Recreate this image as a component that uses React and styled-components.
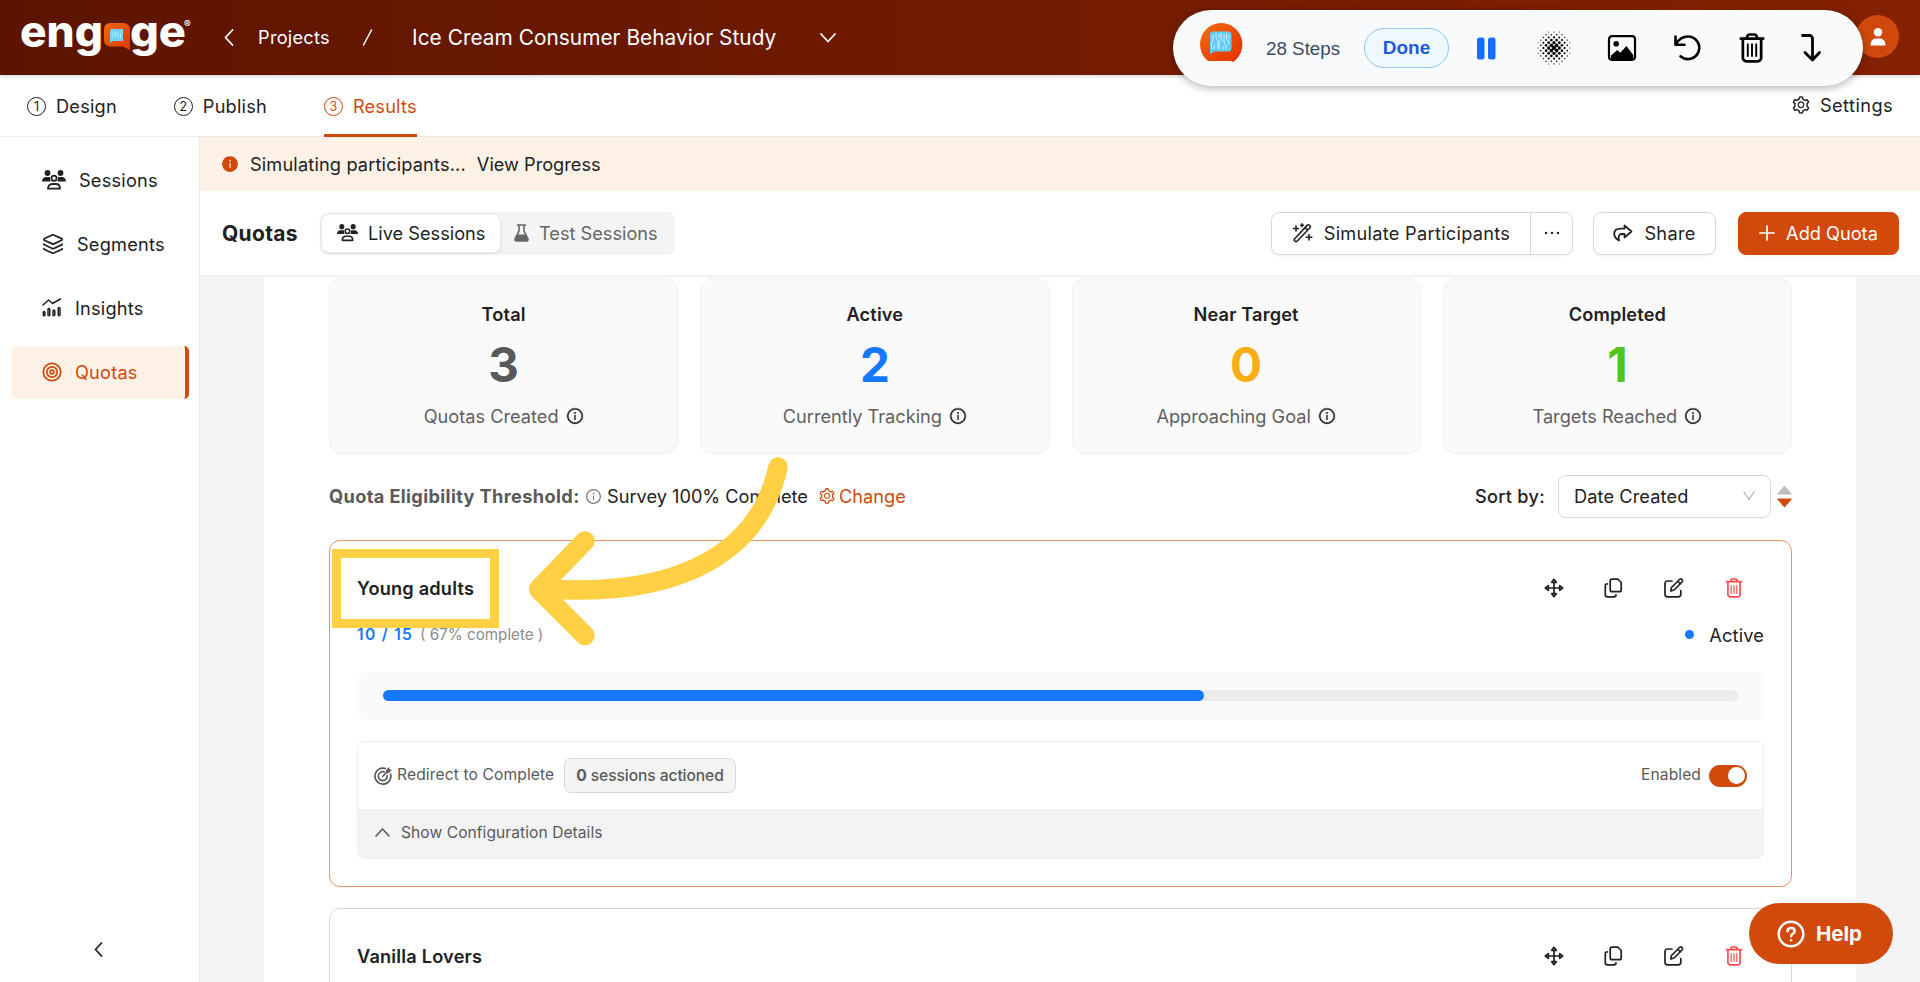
import React from "react";
import styled, { createGlobalStyle, css } from "styled-components";
import {
  AiOutlineSetting,
  AiOutlineInfoCircle,
  AiFillInfoCircle,
} from "react-icons/ai";
import { Layers } from "lucide-react";

const GlobalStyle = createGlobalStyle`
  * {
    box-sizing: border-box;
  }

  body {
    margin: 0;
    overflow: hidden;
    background: #fff;
    color: #212121;
    font-family: "Inter", "Open Sans", sans-serif;
    font-size: 18.2px;
    line-height: 28px;
  }

  svg {
    display: block;
    flex: none;
    overflow: visible;
  }
`;

/* ---------- layout ---------- */

const Page = styled.div`
  width: 1920px;
  height: 982px;
  display: flex;
  flex-direction: column;
  overflow: hidden;
  position: relative;
`;

const Header = styled.header`
  height: 75px;
  flex: none;
  display: flex;
  align-items: center;
  padding: 0 21px;
  color: #fff;
  background: linear-gradient(90deg, #5c1400 0%, #731b00 55%, #852100 100%);
  box-shadow: 0 1px 4px rgba(0, 0, 0, 0.2);
  position: relative;
`;

const BackButton = styled.div`
  width: 34px;
  margin-left: 27px;
`;

const Crumb = styled.span`
  width: 104px;
  padding-bottom: 1px;
  letter-spacing: 0.26px;
`;

const Slash = styled.span`
  width: 50px;
  display: flex;
`;

const ProjectName = styled.span`
  width: 408px;
  font-size: 20.8px;
  letter-spacing: 0.05px;
  white-space: nowrap;
`;

const Tabs = styled.nav`
  height: 62px;
  flex: none;
  display: flex;
  justify-content: space-between;
  padding: 0 27px;
  border-bottom: 1px solid #ececec;
`;

const TabGroup = styled.div`
  display: flex;
  gap: 57px;
`;

const Tab = styled.div`
  height: 62px;
  display: flex;
  align-items: center;
  gap: 10px;
  padding-top: 3px;
  letter-spacing: 0.2px;
  color: ${(p) => (p.$active ? "#d1490b" : "inherit")};
  border-bottom: 3px solid ${(p) => (p.$active ? "#d1490b" : "transparent")};
`;

const StepNumber = styled.span`
  width: 19px;
  height: 19px;
  border: 1.3px solid currentColor;
  border-radius: 50%;
  font-size: 12.5px;
  line-height: 17px;
  letter-spacing: 0;
  text-align: center;
`;

const SettingsLink = styled.div`
  display: flex;
  align-items: center;
  gap: 9px;
  padding-bottom: 2px;
  letter-spacing: 0.42px;
`;

const Body = styled.div`
  flex: 1;
  min-height: 0;
  display: flex;
`;

const Sidebar = styled.aside`
  width: 200px;
  flex: none;
  border-right: 1px solid #ebebeb;
  padding: 17px 10px 20px 11px;
  display: flex;
  flex-direction: column;
  gap: 11px;
`;

const SideItem = styled.div`
  height: 53px;
  display: flex;
  align-items: center;
  gap: 13px;
  padding: 0 0 2px 31px;
  border-radius: 5px;
  letter-spacing: 0.2px;
  border-right: 4px solid transparent;

  ${(p) =>
    p.$active &&
    css`
      color: #d1490b;
      background: #fef2e6;
      border-right-color: #d1490b;
    `}
`;

const Collapse = styled.div`
  margin-top: auto;
  display: flex;
  justify-content: center;
  padding: 0 2px 5px 0;
`;

const Main = styled.main`
  flex: 1;
  min-width: 0;
  display: flex;
  flex-direction: column;
`;

const Banner = styled.div`
  height: 54px;
  flex: none;
  display: flex;
  align-items: center;
  padding-left: 21px;
  background: #fef2e6;
  letter-spacing: 0.15px;

  svg {
    margin-right: 11px;
  }

  span + span {
    margin-left: 11px;
    letter-spacing: 0;
  }
`;

const Toolbar = styled.div`
  height: 86px;
  flex: none;
  display: flex;
  align-items: center;
  padding: 0 21px 0 22px;
  border-bottom: 2px solid #f1f1f1;
`;

const PageTitle = styled.h1`
  margin: 2px 0 0;
  width: 98px;
  font-size: 21px;
  font-weight: 700;
  letter-spacing: 0.3px;
`;

const Segmented = styled.div`
  width: 355px;
  height: 43px;
  display: flex;
  padding: 3px 2px;
  border-radius: 8px;
  background: #f4f4f4;
`;

const Segment = styled.div`
  flex: none;
  display: flex;
  align-items: center;
  border-radius: 7px;
  padding-left: 14px;
  gap: 10px;
  width: 178px;
  color: #666;

  ${(p) =>
    p.$active &&
    css`
      padding-left: 15px;
      color: #222;
      background: #fff;
      box-shadow: 0 1px 4px rgba(0, 0, 0, 0.12);
    `}
`;

const Actions = styled.div`
  margin-left: auto;
  display: flex;
`;

const Button = styled.button`
  height: 43px;
  width: ${(p) => p.$width}px;
  padding: 0;
  display: flex;
  align-items: center;
  justify-content: center;
  gap: 11px;
  font: inherit;
  letter-spacing: 0.28px;
  white-space: nowrap;
  color: #222;
  background: #fff;
  border: 1.3px solid #d9d9d9;
  border-radius: 8px;
  box-shadow: 0 2px 1px rgba(0, 0, 0, 0.03);

  ${(p) =>
    p.$primary &&
    css`
      color: #fff;
      letter-spacing: 0;
      border-color: #d1490b;
      background: #d1490b;
    `}
`;

const ShareButton = styled(Button)`
  margin: 0 22px 0 20px;
`;

const ButtonGroup = styled.div`
  display: flex;

  ${Button}:first-child {
    border-radius: 8px 0 0 8px;
  }

  ${Button}:last-child {
    margin-left: -1px;
    border-radius: 0 8px 8px 0;
  }
`;

const Scroll = styled.div`
  flex: 1;
  min-height: 0;
  overflow: hidden;
  padding: 0 64px;
  background: #f4f4f4;
`;

const Content = styled.div`
  height: 800px;
  padding: 1px 64px 0 65px;
  background: #fff;
`;

/* ---------- stat cards ---------- */

const StatGrid = styled.div`
  display: grid;
  grid-template-columns: repeat(4, 1fr);
  gap: 22px;
`;

const StatCard = styled.div`
  height: 176px;
  display: flex;
  flex-direction: column;
  align-items: center;
  padding-top: 21px;
  background: #fafafa;
  border: 1.3px solid #f0f0f0;
  border-radius: 13px;
`;

const StatTitle = styled.div`
  font-weight: 600;
  letter-spacing: 0.15px;
`;

const StatValue = styled.div`
  height: 50px;
  margin: 11px 0 13px;
  font-size: 47.5px;
  line-height: 52px;
  font-weight: 700;
  color: ${(p) => p.$color};
`;

const StatLabel = styled.div`
  display: flex;
  align-items: center;
  gap: 7px;
  color: #5f5f5f;

  svg {
    color: #212121;
    stroke: currentColor;
    stroke-width: 18;
  }
`;

/* ---------- threshold row ---------- */

const FilterRow = styled.div`
  height: 42px;
  margin: 21px 0 23px;
  display: flex;
  align-items: center;
`;

const ThresholdLabel = styled.span`
  width: 256px;
  font-weight: 700;
  color: #5a5a5a;
  letter-spacing: 0.36px;
  white-space: nowrap;
`;

const ThresholdValue = styled.span`
  width: 211px;
  margin-left: 5px;
  white-space: nowrap;
`;

const ChangeLink = styled.span`
  display: flex;
  align-items: center;
  gap: 3px;
  color: #d1490b;
`;

const SortLabel = styled.span`
  margin-left: auto;
  margin-right: 13px;
  font-weight: 500;
  letter-spacing: 0.25px;
`;

const Select = styled.div`
  width: 213px;
  height: 43px;
  display: flex;
  align-items: center;
  justify-content: space-between;
  padding: 0 15px;
  border: 1.3px solid #d9d9d9;
  border-radius: 8px;
  letter-spacing: 0.1px;
`;

const SortArrows = styled.div`
  margin-left: 6px;
`;

/* ---------- quota cards ---------- */

const QuotaCard = styled.section`
  height: 347px;
  padding: 0 27px;
  margin-bottom: 21px;
  border: 1.4px solid ${(p) => (p.$selected ? "#ef925c" : "#d9d9d9")};
  border-radius: 11px;
`;

const QuotaHead = styled.div`
  display: flex;
  align-items: center;
  justify-content: space-between;
  height: 94px;
`;

const QuotaName = styled.h3`
  margin: 0;
  font-size: 18.2px;
  font-weight: 600;
  letter-spacing: 0.2px;
`;

const IconRow = styled.div`
  display: flex;
  gap: 40px;
  padding-right: 20px;
`;

const QuotaMeta = styled.div`
  display: flex;
  align-items: center;
  height: 28px;
  margin: -15px 0 24px;
  padding-top: 1px;
`;

const Count = styled.span`
  width: 63px;
  font-size: 15.6px;
  font-weight: 600;
  letter-spacing: 1.3px;
  color: #1677ff;
  white-space: pre;
`;

const Percent = styled.span`
  font-size: 15.2px;
  color: #8c8c8c;
`;

const Status = styled.span`
  margin-left: auto;
  display: flex;
  align-items: center;
  gap: 15px;
  letter-spacing: 0.15px;

  &:before {
    content: "";
    width: 9px;
    height: 9px;
    border-radius: 50%;
    background: #1677ff;
  }
`;

const ProgressPanel = styled.div`
  height: 48px;
  display: flex;
  align-items: center;
  padding: 0 26px 1px;
  background: #fafafa;
  border-radius: 10px;
`;

const Track = styled.div`
  flex: 1;
  height: 11px;
  border-radius: 6px;
  background: #ebebeb;
`;

const Fill = styled.div`
  height: 100%;
  border-radius: 6px;
  background: #1677ff;
`;

const ActionBox = styled.div`
  margin-top: 21px;
  border: 1.3px solid #efefef;
  border-radius: 7px;
  overflow: hidden;
  font-size: 15.6px;
  color: #5a5a5a;
`;

const ActionRow = styled.div`
  height: 67px;
  display: flex;
  align-items: center;
  padding: 0 16px;
`;

const ActionName = styled.span`
  width: 167px;
  margin-left: 5px;
  letter-spacing: 0.12px;
  padding-bottom: 1px;
`;

const SessionsBadge = styled.span`
  width: 172px;
  height: 35px;
  line-height: 34px;
  text-align: center;
  font-size: 15.6px;
  font-weight: 500;
  letter-spacing: -0.08px;
  border: 1.3px solid #d9d9d9;
  border-radius: 7px;
  background: #f4f4f4;

  b {
    font-weight: 700;
  }
`;

const SwitchLabel = styled.span`
  margin-left: auto;
  margin-right: 8px;
  padding-bottom: 1px;
  letter-spacing: 0.1px;
`;

const Switch = styled.span`
  width: 38px;
  height: 22px;
  padding: 2.5px;
  display: flex;
  justify-content: flex-end;
  border-radius: 11px;
  background: #d1490b;

  &:before {
    content: "";
    width: 17px;
    height: 17px;
    border-radius: 50%;
    background: #fff;
  }
`;

const DetailsToggle = styled.div`
  height: 49px;
  display: flex;
  align-items: center;
  gap: 11px;
  padding: 0 17px 2px;
  letter-spacing: 0.05px;
  background: #f3f3f3;
  border-top: 1px solid #efefef;
`;

/* ---------- overlays ---------- */

const Avatar = styled.div`
  position: absolute;
  right: 21px;
  top: 15px;
  width: 43px;
  height: 43px;
  display: flex;
  align-items: center;
  justify-content: center;
  border-radius: 50%;
  background: #cf490c;
`;

const Recorder = styled.div`
  position: absolute;
  left: 1173px;
  top: 10px;
  width: 690px;
  height: 76px;
  display: flex;
  align-items: center;
  padding-left: 26px;
  border-radius: 38px;
  background: #f8fafc;
  box-shadow: 0 2px 8px rgba(0, 0, 0, 0.3);
  font-family: "Liberation Sans", Arial, sans-serif;
`;

const RecorderMark = styled.div`
  height: 50px;
`;

const StepCount = styled.span`
  width: 74px;
  margin: 1px 24px 0;
  font-size: 18.8px;
  color: #3b4a63;
  white-space: nowrap;
`;

const DonePill = styled.span`
  width: 85px;
  height: 40px;
  line-height: 38px;
  margin-right: 28px;
  text-align: center;
  font-size: 19px;
  font-weight: 700;
  color: #1d5bd8;
  background: #eff7ff;
  border: 1.4px solid #8cc8fb;
  border-radius: 20px;
`;

const RecorderIcons = styled.div`
  display: grid;
  grid-template-columns: 60px 71px 66px 63px 64px 20px;
  align-items: center;
`;

const Highlight = styled.div`
  position: absolute;
  left: 332px;
  top: 549px;
  width: 167px;
  height: 79px;
  border: 9.7px solid #ffd043;
`;

const PointerArrow = styled.svg`
  position: absolute;
  left: 520px;
  top: 450px;
`;

const HelpButton = styled.button`
  position: absolute;
  left: 1749px;
  top: 903px;
  width: 144px;
  height: 61px;
  display: flex;
  align-items: center;
  gap: 11px;
  padding: 0 0 0 28px;
  border: 0;
  border-radius: 31px;
  color: #fff;
  background: #d1490b;
  font: 700 20.5px "Inter", sans-serif;
`;

/* ---------- icons ---------- */

const Line = ({ w, h, stroke = 1.7, children, ...rest }) => (
  <svg
    width={w}
    height={h}
    viewBox={`0 0 ${w} ${h}`}
    fill="none"
    stroke="currentColor"
    strokeWidth={stroke}
    strokeLinecap="round"
    strokeLinejoin="round"
    {...rest}
  >
    {children}
  </svg>
);

const LogoMark = () => (
  <svg width="176" height="44" viewBox="0 0 176 44" fill="#fff">
    <defs>
      <linearGradient id="bubble" x1="0" y1="0" x2="1" y2="1">
        <stop offset="0" stopColor="#f0690f" />
        <stop offset="1" stopColor="#e23400" />
      </linearGradient>
    </defs>
    <g fontFamily="Inter, sans-serif" fontWeight="800" fontSize="43">
      <text x="-1" y="31" textLength="83" lengthAdjust="spacingAndGlyphs">
        eng
      </text>
      <text x="109" y="31" textLength="56" lengthAdjust="spacingAndGlyphs">
        ge
      </text>
    </g>
    <path
      d="M89 7h14a6 6 0 0 1 6 6v21l-7-3.500H89a6 6 0 0 1-6-6V13a6 6 0 0 1 6-6z"
      fill="url(#bubble)"
    />
    <path d="M91 13h11v12H92l-3 2V15a2 2 0 0 1 2-2z" fill="#6fd0fa" />
    <path
      d="M92 15v7M94.500 16v4M97 15v8M99.500 17v5M101 14v3"
      stroke="#c9efff"
      strokeWidth="0.8"
    />
    <text
      x="163"
      y="12"
      fontFamily="Inter, sans-serif"
      fontWeight="700"
      fontSize="10"
    >
      ®
    </text>
  </svg>
);

const RecorderLogo = () => (
  <svg width="43" height="40" viewBox="0 0 43 40">
    <defs>
      <linearGradient id="recorder" x1="0" y1="0" x2="1" y2="1">
        <stop offset="0" stopColor="#f36c0f" />
        <stop offset="1" stopColor="#e23000" />
      </linearGradient>
    </defs>
    <path
      d="M21.500 0a21.400 21.400 0 0 1 14 38l-1 1-3-1H9A21.400 21.400 0 0 1 21.500 0z"
      fill="url(#recorder)"
    />
    <path
      d="M14 8.500h15a3.500 3.500 0 0 1 3.500 3.500v13a3.500 3.500 0 0 1-3.500 3.500H15l-4 3V11.500a3 3 0 0 1 3-3z"
      fill="#5ecbf8"
    />
    <path
      d="M14 12v6l-1.500 2v6M17 10v5l2 2v9M20 11v4M22 9.500v8l-2 2v7M25 11v9l2 2v4M27.500 10v6l2 2v3M30 12v4M24 24v3M15 22v4"
      fill="none"
      stroke="#d3f3ff"
      strokeWidth="1"
    />
  </svg>
);

const ChevronIcon = ({ dir = "down", length = 16, stroke = 1.8 }) => {
  const half = length / 2;
  const vertical = dir === "left";
  const w = vertical ? half + 3 : length + 2;
  const h = vertical ? length + 2 : half + 3;
  const points = {
    down: `1,1 ${half + 1},${half + 1.5} ${length + 1},1`,
    up: `1,${half + 1.5} ${half + 1},1 ${length + 1},${half + 1.5}`,
    left: `${half + 1},1 1.5,${half + 1} ${half + 1},${length + 1}`,
  };
  return (
    <Line w={w} h={h} stroke={stroke}>
      <polyline points={points[dir]} />
    </Line>
  );
};

const PeopleIcon = ({ size = 24 }) => (
  <svg width={size} height={(size * 20) / 24} viewBox="0 0 24 20">
    <g fill="currentColor">
      <circle cx="5.500" cy="3" r="2.900" />
      <circle cx="18.500" cy="3" r="2.900" />
      <path d="M0 11.500C0 8.800 1.800 7 4 7h2.600c.6 0 1 .1 1.500.3a5 5 0 0 0 .6 4.200z" />
      <path d="M24 11.500C24 8.800 22.200 7 20 7h-2.600c-.6 0-1 .1-1.500.3a5 5 0 0 1-.6 4.200z" />
    </g>
    <g fill="none" stroke="currentColor" strokeWidth="1.800">
      <circle cx="12" cy="8.300" r="2.600" />
      <path
        d="M6 18.700c0-2.800 1.700-4.700 4-4.700h4c2.300 0 4 1.900 4 4.700z"
        strokeLinejoin="round"
      />
    </g>
  </svg>
);

const ChartIcon = () => (
  <Line w={20} h={19} stroke={1.5}>
    <path d="M1 7l5.500-5 4 3.500L18.500 1" />
    <rect x="1.300" y="13.500" width="1.600" height="4.200" rx=".8" />
    <rect x="6" y="10.500" width="1.800" height="7.200" rx=".9" />
    <rect x="11" y="12" width="1.800" height="5.700" rx=".9" />
    <rect x="16.200" y="9.500" width="1.800" height="8.200" rx=".9" />
  </Line>
);

const RingsIcon = () => (
  <Line w={20} h={20} stroke={1.7}>
    <circle cx="10" cy="10" r="8.700" />
    <circle cx="10" cy="10" r="5.200" />
    <circle cx="10" cy="10" r="1.900" />
  </Line>
);

const FlaskIcon = () => (
  <svg width="15" height="18" viewBox="0 0 15 18">
    <path
      d="M3.500 1h8M5 1v6L1.200 14.500c-.7 1.500.1 2.500 1.300 2.500h10c1.200 0 2-1 1.300-2.500L10 7V1"
      fill="none"
      stroke="currentColor"
      strokeWidth="1.600"
      strokeLinecap="round"
    />
    <path
      d="M3.500 10.500h8l2.300 4.500c.4 1-.2 2-1.300 2h-10c-1.100 0-1.700-1-1.300-2z"
      fill="currentColor"
    />
  </svg>
);

const WandIcon = () => (
  <Line w={21} h={20} stroke={1.6}>
    <path d="M2.300 16.300L15.300 2.100a1.300 1.300 0 0 1 1.900 0l.8.800a1.300 1.300 0 0 1 0 1.900L5 18.200a1.300 1.300 0 0 1-1.900 0l-.8-.700a1 1 0 0 1 0-1.200zM13 4.600l2.700 2.700" />
    <path d="M4 3v5M1.500 5.500h5M10 .8v3M8.500 2.300h3M17 11.500v5.500M14.300 14.200h5.500" />
  </Line>
);

const ShareIcon = () => (
  <Line w={20} h={18} stroke={1.8}>
    <path d="M11.500 1.500l7 6-7 6v-3.500H9c-3 0-4 2.200-3 6.500C3 14.800 1.200 12.700 1.200 10c0-3.500 2.800-5.300 6.300-5.300h4z" />
  </Line>
);

const MoveIcon = () => (
  <Line w={20} h={20} stroke={1.7}>
    <path d="M10 4.500v11M4.500 10h11" />
    <path d="M10 1.300L12.300 4.300H7.700zM10 18.700L12.300 15.700H7.700zM1.300 10L4.300 7.700v4.600zM18.700 10L15.700 7.700v4.600z" />
  </Line>
);

const CopyIcon = () => (
  <Line w={20} h={20} stroke={1.7}>
    <path d="M8.200 1.200h5.600L17.200 4.500v7.200a2 2 0 0 1-2 2h-7a2 2 0 0 1-2-2v-8.500a2 2 0 0 1 2-2z" />
    <path d="M3.300 5.800a2 2 0 0 0-2 2v9a2 2 0 0 0 2 2h6.700a2 2 0 0 0 2-2" />
  </Line>
);

const EditIcon = () => (
  <Line w={20} h={20} stroke={1.7}>
    <path d="M8 3H3.600a2.600 2.600 0 0 0-2.600 2.600v10.600a2.600 2.600 0 0 0 2.600 2.600h10.600a2.600 2.600 0 0 0 2.600-2.600V12.500" />
    <path d="M6.800 13l.7-3.500 8-8a1.700 1.700 0 0 1 2.500 2.500l-8 8zM13.800 3.300L16.400 6" />
  </Line>
);

const TrashIcon = ({ w = 20, h = 20, stroke = 1.7, color = "currentColor" }) => (
  <svg
    width={w}
    height={h}
    viewBox="0 0 20 20"
    fill="none"
    stroke={color}
    strokeWidth={stroke}
    strokeLinecap="round"
    strokeLinejoin="round"
  >
    <path d="M2.500 3.700h15M6.300 3.500l.9-1.900c.2-.4.5-.6 1-.6h3.600c.5 0 .8.200 1 .6l.9 1.900" />
    <path d="M3.900 3.900V16.500a2.400 2.400 0 0 0 2.400 2.400h7.400a2.400 2.400 0 0 0 2.400-2.400V3.900" />
    <path d="M7.200 7.500v7.800M10 7.500v7.800M12.800 7.500v7.800" strokeWidth={stroke * 0.7} />
  </svg>
);

const GoalIcon = () => (
  <Line w={18} h={18} stroke={1.6}>
    <path d="M11.500 1.600A8 8 0 1 0 16.600 7" />
    <path d="M10.500 5A4.500 4.500 0 1 0 13.200 8.500" />
    <path d="M8.800 9.200L13 5" />
    <path d="M12.500 5.500V3L15 .8V3h2.300L15 5.500z" fill="currentColor" strokeWidth="1" />
  </Line>
);

const dots = [];
for (let row = -6; row <= 6; row++) {
  for (let col = -6; col <= 6; col++) {
    const dist = Math.hypot(row, col);
    if ((row + col) % 2 === 0 && dist < 6.6) {
      dots.push({ x: 17 + col * 2.65, y: 17 + row * 2.65, r: 2.15 - dist * 0.26 });
    }
  }
}

const HalftoneIcon = () => (
  <svg width="34" height="34" viewBox="0 0 34 34">
    {dots.map((d, i) => (
      <circle key={i} cx={d.x} cy={d.y} r={d.r} />
    ))}
  </svg>
);

const ImageIcon = () => (
  <svg width="28" height="26" viewBox="0 0 28 26">
    <rect x="1" y="1.200" width="26" height="23.600" rx="3" fill="none" stroke="#000" strokeWidth="2.200" />
    <circle cx="8.200" cy="8.700" r="2.800" />
    <path d="M3 24v-3.500l6.300-5.500 3 2.800L18.500 11l6.700 9V24z" />
  </svg>
);

const QuotaIcons = () => (
  <IconRow>
    <MoveIcon />
    <CopyIcon />
    <EditIcon />
    <TrashIcon color="#ff4d4f" />
  </IconRow>
);

/* ---------- data ---------- */

const steps = ["Design", "Publish", "Results"];

const menu = [
  { label: "Sessions", icon: <PeopleIcon /> },
  { label: "Segments", icon: <Layers size={22} strokeWidth={1.9} /> },
  { label: "Insights", icon: <ChartIcon /> },
  { label: "Quotas", icon: <RingsIcon />, active: true },
];

const stats = [
  { title: "Total", value: 3, label: "Quotas Created", color: "#595959" },
  { title: "Active", value: 2, label: "Currently Tracking", color: "#1677ff" },
  { title: "Near Target", value: 0, label: "Approaching Goal", color: "#faad14" },
  { title: "Completed", value: 1, label: "Targets Reached", color: "#52c41a" },
];

const App = () => {
  const progress = 60.6;

  return (
    <Page>
      <GlobalStyle />
      <Header>
        <LogoMark />
        <BackButton>
          <ChevronIcon dir="left" length={15} />
        </BackButton>
        <Crumb>Projects</Crumb>
        <Slash>
          <Line w={11} h={17} stroke={1.5}>
            <path d="M9.500 1L1.500 16" />
          </Line>
        </Slash>
        <ProjectName>Ice Cream Consumer Behavior Study</ProjectName>
        <ChevronIcon length={14} />
        <Avatar>
          <svg width="16" height="18" viewBox="0 0 16 18" fill="#fff">
            <circle cx="8" cy="4.300" r="4.200" />
            <path d="M.5 17.500C.5 13 3 10.500 6 10.500h4c3 0 5.500 2.500 5.500 7z" />
          </svg>
        </Avatar>
      </Header>

      <Tabs>
        <TabGroup>
          {steps.map((step, index) => (
            <Tab key={step} $active={step === "Results"}>
              <StepNumber>{index + 1}</StepNumber>
              {step}
            </Tab>
          ))}
        </TabGroup>
        <SettingsLink>
          <AiOutlineSetting size={20} />
          Settings
        </SettingsLink>
      </Tabs>

      <Body>
        <Sidebar>
          {menu.map((item) => (
            <SideItem key={item.label} $active={item.active}>
              {item.icon}
              {item.label}
            </SideItem>
          ))}
          <Collapse>
            <ChevronIcon dir="left" length={13} />
          </Collapse>
        </Sidebar>

        <Main>
          <Banner>
            <AiFillInfoCircle size={18} color="#d1490b" />
            <span>Simulating participants...</span>
            <span>View Progress</span>
          </Banner>
          <Toolbar>
            <PageTitle>Quotas</PageTitle>
            <Segmented>
              <Segment $active>
                <PeopleIcon size={21} />
                Live Sessions
              </Segment>
              <Segment>
                <FlaskIcon />
                Test Sessions
              </Segment>
            </Segmented>
            <Actions>
              <ButtonGroup>
                <Button $width={260}>
                  <WandIcon />
                  Simulate Participants
                </Button>
                <Button $width={43}>
                  <svg width="16" height="4" viewBox="0 0 16 4" fill="currentColor">
                    <circle cx="2" cy="2" r="1.200" />
                    <circle cx="8" cy="2" r="1.200" />
                    <circle cx="14" cy="2" r="1.200" />
                  </svg>
                </Button>
              </ButtonGroup>
              <ShareButton $width={123}>
                <ShareIcon />
                Share
              </ShareButton>
              <Button $width={161} $primary>
                <Line w={16} h={16}>
                  <path d="M8 1v14M1 8h14" />
                </Line>
                Add Quota
              </Button>
            </Actions>
          </Toolbar>

          <Scroll>
            <Content>
              <StatGrid>
                {stats.map((stat) => (
                  <StatCard key={stat.title}>
                    <StatTitle>{stat.title}</StatTitle>
                    <StatValue $color={stat.color}>{stat.value}</StatValue>
                    <StatLabel>
                      {stat.label}
                      <AiOutlineInfoCircle size={18} />
                    </StatLabel>
                  </StatCard>
                ))}
              </StatGrid>

              <FilterRow>
                <ThresholdLabel>Quota Eligibility Threshold:</ThresholdLabel>
                <AiOutlineInfoCircle size={17} color="#7a7a7a" />
                <ThresholdValue>Survey 100% Complete</ThresholdValue>
                <ChangeLink>
                  <AiOutlineSetting size={18} />
                  Change
                </ChangeLink>
                <SortLabel>Sort by:</SortLabel>
                <Select>
                  Date Created
                  <Line w={12} h={10} stroke={1.3} color="#b5b5b5">
                    <path d="M1 1l5 7.500L11 1" />
                  </Line>
                </Select>
                <SortArrows>
                  <svg width="15" height="23" viewBox="0 0 15 23">
                    <path d="M7.500 .5L14.500 8.500V9.500H.5V8.500z" fill="#bfbfbf" />
                    <path d="M7.500 22.500L14.500 14.500V13.500H.5V14.500z" fill="#d1490b" />
                  </svg>
                </SortArrows>
              </FilterRow>

              <QuotaCard $selected>
                <QuotaHead>
                  <QuotaName>Young adults</QuotaName>
                  <QuotaIcons />
                </QuotaHead>
                <QuotaMeta>
                  <Count>10 / 15</Count>
                  <Percent>( 67% complete )</Percent>
                  <Status>Active</Status>
                </QuotaMeta>
                <ProgressPanel>
                  <Track>
                    <Fill style={{ width: `${progress}%` }} />
                  </Track>
                </ProgressPanel>
                <ActionBox>
                  <ActionRow>
                    <GoalIcon />
                    <ActionName>Redirect to Complete</ActionName>
                    <SessionsBadge>
                      <b>0</b> sessions actioned
                    </SessionsBadge>
                    <SwitchLabel>Enabled</SwitchLabel>
                    <Switch />
                  </ActionRow>
                  <DetailsToggle>
                    <ChevronIcon dir="up" length={13} stroke={1.6} />
                    Show Configuration Details
                  </DetailsToggle>
                </ActionBox>
              </QuotaCard>

              <QuotaCard>
                <QuotaHead>
                  <QuotaName>Vanilla Lovers</QuotaName>
                  <QuotaIcons />
                </QuotaHead>
              </QuotaCard>
            </Content>
          </Scroll>
        </Main>
      </Body>

      <Highlight />
      <PointerArrow width="280" height="210" viewBox="520 450 280 210">
        <g fill="none" stroke="#ffd043" strokeWidth="19.500" strokeLinecap="round" strokeLinejoin="round">
          <path d="M778 467C761 545 690 600 541 588.500" />
          <path d="M585 541L538.500 589L585 635.500" />
        </g>
      </PointerArrow>

      <Recorder>
        <RecorderMark>
          <RecorderLogo />
        </RecorderMark>
        <StepCount>28 Steps</StepCount>
        <DonePill>Done</DonePill>
        <RecorderIcons>
          <svg width="19" height="23" viewBox="0 0 19 23" fill="#1570ff">
            <rect width="7.500" height="22" y=".5" rx="2.500" />
            <rect x="11" width="7.500" height="22" y=".5" rx="2.500" />
          </svg>
          <HalftoneIcon />
          <ImageIcon />
          <Line w={27} h={26} stroke={2.6} color="#000">
            <path d="M1.500 1.500v8.300h9" />
            <path d="M2 9C5 3.800 9 1.500 14 1.500a11.300 11.300 0 1 1-7.500 19.800" />
          </Line>
          <TrashIcon w={30} h={30} stroke={1.8} color="#000" />
          <Line w={20} h={28} stroke={2.8} color="#000">
            <path d="M1.500 1.500h7a3 3 0 0 1 3 3v21M4 18.500l7.500 7.500 7-7.500" />
          </Line>
        </RecorderIcons>
      </Recorder>

      <HelpButton>
        <Line w={28} h={28} stroke={2.5}>
          <circle cx="14" cy="14" r="12.300" />
          <path d="M10.500 11.300c0-2 1.500-3.300 3.600-3.300s3.600 1.300 3.600 3c0 2.600-3.600 2.700-3.600 5.200" />
          <path d="M14.100 20.200v.1" />
        </Line>
        Help
      </HelpButton>
    </Page>
  );
};

export default App;
